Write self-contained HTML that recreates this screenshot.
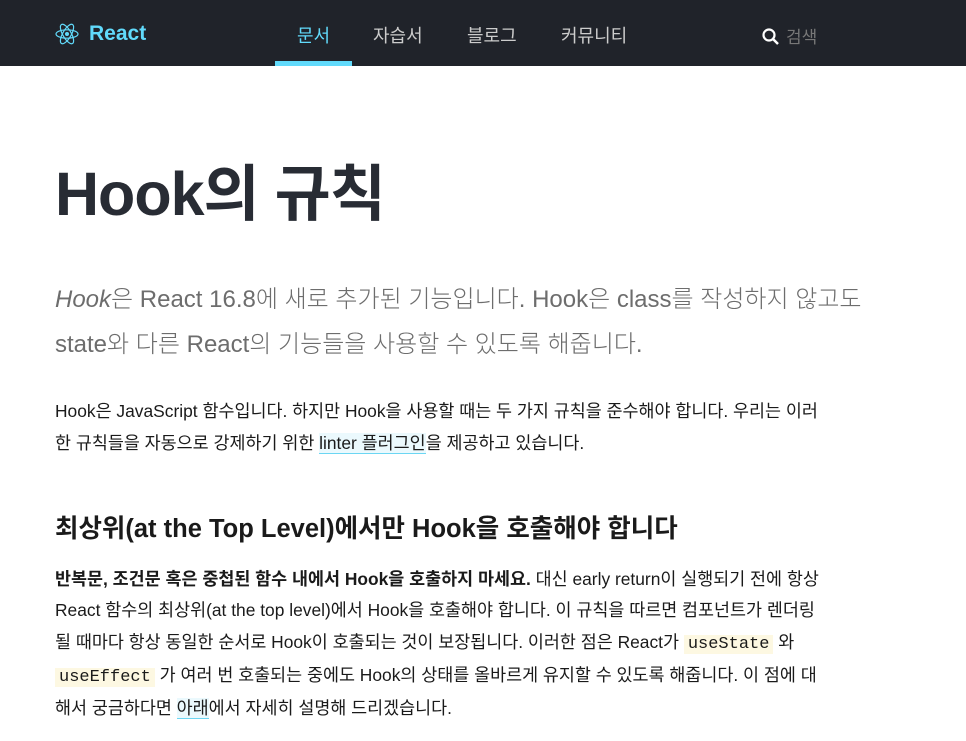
<!DOCTYPE html>
<html><head><meta charset="utf-8"><style>
*{margin:0;padding:0;box-sizing:border-box}
body{width:966px;height:741px;overflow:hidden;background:#fff;font-family:"Liberation Sans","Noto Sans CJK KR",sans-serif;color:#1a1a1a}
.hdr{height:66px;background:#20232a;position:relative}
.logo{position:absolute;left:55px;top:22px;display:flex;align-items:center;color:#61dafb;font-weight:bold;font-size:21px}
.logo svg{margin-right:10px}
.nav a{position:absolute;top:22px;font-size:18px;color:#ccc;text-decoration:none}
.act{position:absolute;left:275px;top:61px;width:77px;height:5px;background:#61dafb}
.srch{position:absolute;left:762px;top:23px;color:#777;font-size:17px}
h1{position:absolute;left:55px;top:144px;font-size:61px;font-weight:bold;color:#282c34;letter-spacing:-1px}
.intro{position:absolute;left:55px;top:277px;width:900px;font-size:24px;line-height:45px;color:#6d6d6d;font-weight:300;white-space:nowrap}
.p1{position:absolute;left:55px;top:395px;width:775px;font-size:17.4px;line-height:32px}
h2{position:absolute;left:55px;top:508px;font-size:25.5px;font-weight:bold;color:#1a1a1a}
.p2{position:absolute;left:55px;top:564px;width:775px;font-size:17.4px;line-height:31.3px}
a.l{color:#1a1a1a;text-decoration:none;background:#ebf9fd;border-bottom:1px solid #6bd6f3}
code{font-family:"Liberation Mono",monospace;background:#fdf8e2;padding:0 4px;font-size:17px}
</style></head><body>
<div class="hdr">
<div class="logo"><svg width="24" height="24" viewBox="-12 -12 24 24" fill="none" stroke="#61dafb" stroke-width="1.2"><circle r="2" fill="#61dafb" stroke="none"/><ellipse rx="11" ry="4.2"/><ellipse rx="11" ry="4.2" transform="rotate(60)"/><ellipse rx="11" ry="4.2" transform="rotate(120)"/></svg>React</div>
<div class="nav"><a style="left:297px;color:#61dafb">문서</a><a style="left:373px">자습서</a><a style="left:467px">블로그</a><a style="left:561px">커뮤니티</a></div>
<div class="act"></div>
<div class="srch"><svg width="18" height="18" viewBox="0 0 18 18" style="vertical-align:-3px;margin-right:6px"><circle cx="7" cy="7" r="5.5" fill="none" stroke="#fff" stroke-width="2.2"/><path d="M11 11l5 5" stroke="#fff" stroke-width="2.5"/></svg>검색</div>
</div>
<h1>Hook의 규칙</h1>
<div class="intro"><i>Hook</i>은 React 16.8에 새로 추가된 기능입니다. Hook은 class를 작성하지 않고도<br>state와 다른 React의 기능들을 사용할 수 있도록 해줍니다.</div>
<div class="p1">Hook은 JavaScript 함수입니다. 하지만 Hook을 사용할 때는 두 가지 규칙을 준수해야 합니다. 우리는 이러한 규칙들을 자동으로 강제하기 위한 <a class="l">linter 플러그인</a>을 제공하고 있습니다.</div>
<h2>최상위(at the Top Level)에서만 Hook을 호출해야 합니다</h2>
<div class="p2"><b>반복문, 조건문 혹은 중첩된 함수 내에서 Hook을 호출하지 마세요.</b> 대신 early return이 실행되기 전에 항상 React 함수의 최상위(at the top level)에서 Hook을 호출해야 합니다. 이 규칙을 따르면 컴포넌트가 렌더링 될 때마다 항상 동일한 순서로 Hook이 호출되는 것이 보장됩니다. 이러한 점은 React가 <code>useState</code> 와 <code>useEffect</code> 가 여러 번 호출되는 중에도 Hook의 상태를 올바르게 유지할 수 있도록 해줍니다. 이 점에 대해서 궁금하다면 <a class="l">아래</a>에서 자세히 설명해 드리겠습니다.</div>
</body></html>
